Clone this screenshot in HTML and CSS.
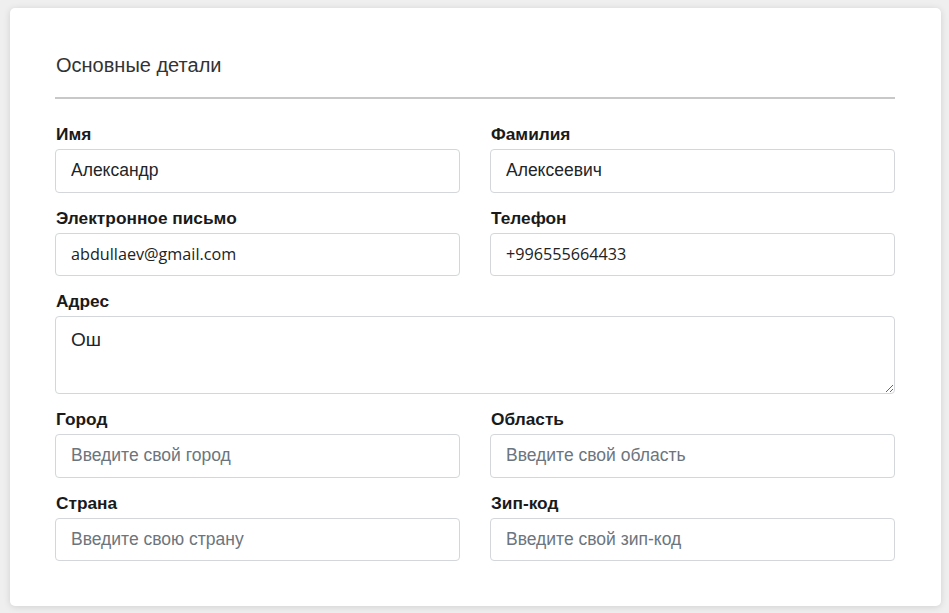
FILE: index.html
```html
<!DOCTYPE html>
<html lang="ru">
<head>
<meta charset="utf-8">
<title>Основные детали</title>
<link rel="stylesheet" href="styles.css">
</head>
<body>
<div class="page">
  <section class="card">
    <h2 class="card-title">Основные детали</h2>
    <form class="form">
      <div class="field">
        <label class="label">Имя</label>
        <input class="input" type="text" value="Александр">
      </div>
      <div class="field">
        <label class="label">Фамилия</label>
        <input class="input" type="text" value="Алексеевич">
      </div>
      <div class="field">
        <label class="label">Электронное письмо</label>
        <input class="input input-email" type="text" value="abdullaev@gmail.com">
      </div>
      <div class="field">
        <label class="label">Телефон</label>
        <input class="input input-email" type="text" value="+996555664433">
      </div>
      <div class="field field-wide">
        <label class="label">Адрес</label>
        <textarea class="input textarea">Ош</textarea>
      </div>
      <div class="field">
        <label class="label">Город</label>
        <input class="input" type="text" placeholder="Введите свой город">
      </div>
      <div class="field">
        <label class="label">Область</label>
        <input class="input" type="text" placeholder="Введите свой область">
      </div>
      <div class="field">
        <label class="label">Страна</label>
        <input class="input" type="text" placeholder="Введите свою страну">
      </div>
      <div class="field">
        <label class="label">Зип-код</label>
        <input class="input" type="text" placeholder="Введите свой зип-код">
      </div>
    </form>
  </section>
</div>
</body>
</html>
```

FILE: styles.css
```css
html, body {
  margin: 0;
  padding: 0;
  background: #efefef;
  font-family: "Liberation Sans", Arial, sans-serif;
  color: #212529;
}
.page {
  padding: 8px 8px 7px 10px;
  height: 613px;
  box-sizing: border-box;
}
.card {
  width: 931px;
  box-sizing: border-box;
  background: #fff;
  border-radius: 5px;
  box-shadow: 0 1px 7px rgba(0,0,0,0.13);
  padding: 38px 46px 45px 45px;
}
.card-title {
  margin: 0 0 25px 0;
  font-size: 20px;
  font-weight: 400;
  color: #333;
  line-height: 38px;
  padding: 0 0 13px 1px;
  border-bottom: 2px solid #c8c8c8;
}
.form {
  display: grid;
  grid-template-columns: 1fr 1fr;
  column-gap: 30px;
  row-gap: 15px;
}
.field {
  display: flex;
  flex-direction: column;
  gap: 5px;
}
.field-wide {
  grid-column: 1 / -1;
}
.label {
  font-size: 17.3px;
  font-weight: 700;
  line-height: 20px;
  color: #1a1a1a;
  padding-left: 1px;
}
.input {
  height: 43.5px;
  box-sizing: border-box;
  border: 1px solid #d3d6da;
  border-radius: 4px;
  padding: 0 15px;
  font-family: "Liberation Sans", Arial, sans-serif;
  font-size: 17.5px;
  color: #212529;
  background: #fff;
  outline: none;
  width: 100%;
}
.input::placeholder {
  color: #6c757d;
}
.input-email {
  font-family: "Open Sans", "Lato", sans-serif;
  font-size: 16.2px;
  color: #222;
}
.textarea {
  height: 78px;
  padding: 12px 15px;
  font-size: 19px;
  resize: vertical;
  display: block;
}
```
